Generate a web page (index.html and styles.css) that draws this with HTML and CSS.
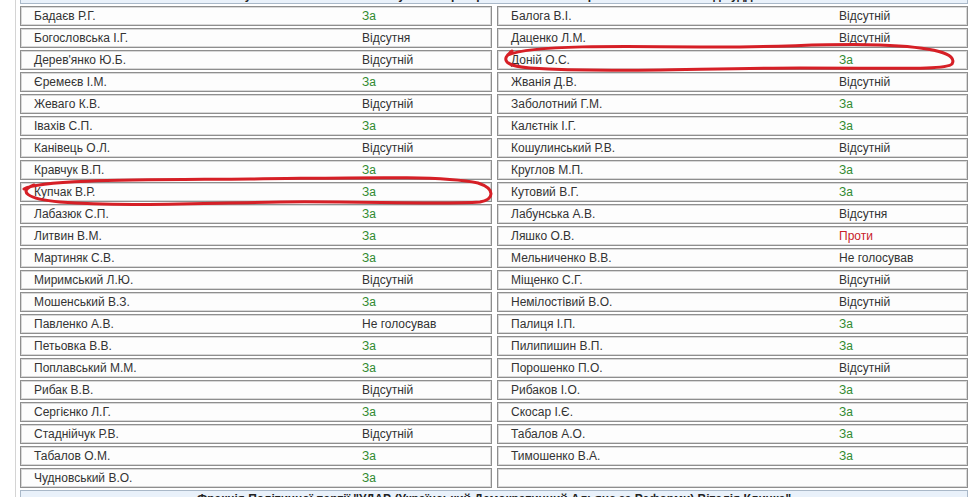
FILE: index.html
```html
<!DOCTYPE html>
<html lang="uk">
<head>
<meta charset="utf-8">
<link rel="stylesheet" href="styles.css">
</head>
<body>
<div class="page">
  <div class="band band-top">Результати поіменного голосування про проект Постанови про звільнення з посад суддів</div>
  <div class="grid">
    <div class="cell"><span>Бадаєв Р.Г.</span><span class="yes">За</span></div>
    <div class="cell"><span>Балога В.І.</span><span>Відсутній</span></div>
    <div class="cell"><span>Богословська І.Г.</span><span>Відсутня</span></div>
    <div class="cell"><span>Даценко Л.М.</span><span>Відсутній</span></div>
    <div class="cell"><span>Дерев'янко Ю.Б.</span><span>Відсутній</span></div>
    <div class="cell"><span>Доній О.С.</span><span class="yes">За</span></div>
    <div class="cell"><span>Єремеєв І.М.</span><span class="yes">За</span></div>
    <div class="cell"><span>Жванія Д.В.</span><span>Відсутній</span></div>
    <div class="cell"><span>Жеваго К.В.</span><span>Відсутній</span></div>
    <div class="cell"><span>Заболотний Г.М.</span><span class="yes">За</span></div>
    <div class="cell"><span>Івахів С.П.</span><span class="yes">За</span></div>
    <div class="cell"><span>Калєтнік І.Г.</span><span class="yes">За</span></div>
    <div class="cell"><span>Канівець О.Л.</span><span>Відсутній</span></div>
    <div class="cell"><span>Кошулинський Р.В.</span><span>Відсутній</span></div>
    <div class="cell"><span>Кравчук В.П.</span><span class="yes">За</span></div>
    <div class="cell"><span>Круглов М.П.</span><span class="yes">За</span></div>
    <div class="cell"><span>Купчак В.Р.</span><span class="yes">За</span></div>
    <div class="cell"><span>Кутовий В.Г.</span><span class="yes">За</span></div>
    <div class="cell"><span>Лабазюк С.П.</span><span class="yes">За</span></div>
    <div class="cell"><span>Лабунська А.В.</span><span>Відсутня</span></div>
    <div class="cell"><span>Литвин В.М.</span><span class="yes">За</span></div>
    <div class="cell"><span>Ляшко О.В.</span><span class="no">Проти</span></div>
    <div class="cell"><span>Мартиняк С.В.</span><span class="yes">За</span></div>
    <div class="cell"><span>Мельниченко В.В.</span><span>Не голосував</span></div>
    <div class="cell"><span>Миримський Л.Ю.</span><span>Відсутній</span></div>
    <div class="cell"><span>Міщенко С.Г.</span><span>Відсутній</span></div>
    <div class="cell"><span>Мошенський В.З.</span><span class="yes">За</span></div>
    <div class="cell"><span>Немілостівий В.О.</span><span>Відсутній</span></div>
    <div class="cell"><span>Павленко А.В.</span><span>Не голосував</span></div>
    <div class="cell"><span>Палиця І.П.</span><span class="yes">За</span></div>
    <div class="cell"><span>Петьовка В.В.</span><span class="yes">За</span></div>
    <div class="cell"><span>Пилипишин В.П.</span><span class="yes">За</span></div>
    <div class="cell"><span>Поплавський М.М.</span><span class="yes">За</span></div>
    <div class="cell"><span>Порошенко П.О.</span><span>Відсутній</span></div>
    <div class="cell"><span>Рибак В.В.</span><span>Відсутній</span></div>
    <div class="cell"><span>Рибаков І.О.</span><span class="yes">За</span></div>
    <div class="cell"><span>Сергієнко Л.Г.</span><span class="yes">За</span></div>
    <div class="cell"><span>Скосар І.Є.</span><span class="yes">За</span></div>
    <div class="cell"><span>Стаднійчук Р.В.</span><span>Відсутній</span></div>
    <div class="cell"><span>Табалов А.О.</span><span class="yes">За</span></div>
    <div class="cell"><span>Табалов О.М.</span><span class="yes">За</span></div>
    <div class="cell"><span>Тимошенко В.А.</span><span class="yes">За</span></div>
    <div class="cell"><span>Чудновський В.О.</span><span class="yes">За</span></div>
    <div class="cell"></div>
  </div>
  <div class="band band-bottom">Фракція Політичної партії "УДАР (Український Демократичний Альянс за Реформи) Віталія Кличка"</div>
</div>
<svg class="marks" width="970" height="497" viewBox="0 0 970 497">
  <path d="M508 55 C530 45 620 46 700 47 C780 48 820 43 880 45 C935 47 958 54 952 64 C946 70 900 68 800 68 C700 68 610 73 530 68 C505 66 500 60 512 51" />
  <path d="M24 189 C40 179 150 180 250 179 C350 178 440 175 478 183 C496 189 494 199 480 202 C440 205 360 201 280 202 C200 203 120 207 60 202 C26 199 18 191 34 185" />
</svg>
</body>
</html>
```
FILE: styles.css
```css
html, body {
  margin: 0;
  padding: 0;
  background: #ffffff;
}

body {
  font-family: "Liberation Sans", Arial, sans-serif;
  font-size: 12px;
  color: #333333;
  overflow: hidden;
  height: 497px;
  position: relative;
}

.page {
  margin-left: 15px;
  border-left: 1px solid #d4d4d4;
  padding-left: 4px;
  width: 948px;
  height: 520px;
}

.band {
  background: #e9f1fa;
  border: 1px solid #a9b8c8;
  height: 16px;
  line-height: 16px;
  text-align: center;
  font-weight: bold;
  color: #222;
  white-space: nowrap;
  overflow: hidden;
}

.band-top {
  margin-top: -14px;
}

.grid {
  display: grid;
  grid-template-columns: 472px 471px;
  column-gap: 5px;
  row-gap: 2px;
  margin: 2px 0 2px 0;
}

.cell {
  display: grid;
  grid-template-columns: 328px 1fr;
  height: 18px;
  line-height: 18px;
  padding-left: 13px;
  border: 1px solid #8e8e8e;
  box-shadow: inset 0 0 0 1px #d8d8d8;
  background: #fdfdfd;
  white-space: nowrap;
}

.yes {
  color: #2f8a2f;
}

.no {
  color: #c8202a;
}

.marks {
  position: absolute;
  left: 0;
  top: 0;
  pointer-events: none;
}

.marks path {
  fill: none;
  stroke: #d61f26;
  stroke-width: 3;
  stroke-linecap: round;
  stroke-linejoin: round;
}
```
